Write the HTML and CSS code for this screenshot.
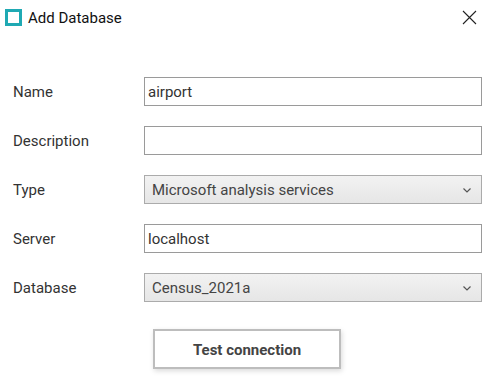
FILE: index.html
```html
<!DOCTYPE html>
<html lang="en">
    <head>
        <meta charset="UTF-8" />
        <title>Add Database</title>
        <link rel="stylesheet" href="styles.css">
    </head>

    <body>
        <div class="dialog">
            <div class="titlebar">
                <span class="app-icon"></span>
                <span class="title">Add Database</span>
                <svg class="close" width="15" height="15" viewBox="0 0 15 15">
                    <path d="M1 1 L14 14 M14 1 L1 14" stroke="#222" stroke-width="1.1" fill="none" />
                </svg>
            </div>

            <div class="form">
                <div class="row">
                    <label>Name</label>
                    <div class="field">airport</div>
                </div>
                <div class="row">
                    <label>Description</label>
                    <div class="field"></div>
                </div>
                <div class="row">
                    <label>Type</label>
                    <div class="field select">
                        <span>Microsoft analysis services</span>
                        <svg class="chevron" width="8" height="5" viewBox="0 0 8 5">
                            <path d="M0.5 0.5 L4 4 L7.5 0.5" stroke="#555" stroke-width="1.2" fill="none" />
                        </svg>
                    </div>
                </div>
                <div class="row">
                    <label>Server</label>
                    <div class="field">localhost</div>
                </div>
                <div class="row">
                    <label>Database</label>
                    <div class="field select">
                        <span>Census_2021a</span>
                        <svg class="chevron" width="8" height="5" viewBox="0 0 8 5">
                            <path d="M0.5 0.5 L4 4 L7.5 0.5" stroke="#555" stroke-width="1.2" fill="none" />
                        </svg>
                    </div>
                </div>
            </div>

            <div class="actions">
                <button class="btn">Test connection</button>
            </div>
        </div>
    </body>
</html>
```

FILE: styles.css
```css
* {
    padding: 0;
    margin: 0;
    box-sizing: border-box;
}

body {
    width: 499px;
    height: 386px;
    background-color: #fff;
    font-family: Roboto, "Noto Sans", sans-serif;
    color: #222;
    overflow: hidden;
}

.titlebar {
    display: flex;
    align-items: center;
    height: 35px;
    padding: 0 22px 0 5px;
}

.app-icon {
    width: 17px;
    height: 17px;
    border: 3px solid #1fa9b3;
    margin-right: 6px;
}

.title {
    flex: 1;
    font-size: 15px;
    color: #111;
}

.form {
    display: flex;
    flex-direction: column;
    gap: 20px;
    padding: 42px 17px 0 13px;
}

.row {
    display: flex;
    align-items: center;
    height: 29px;
}

.row label {
    width: 131px;
    font-size: 15px;
    color: #333;
}

.field {
    flex: 1;
    display: flex;
    align-items: center;
    height: 29px;
    padding: 0 3px 0;
    border: 1px solid #9a9a9a;
    background-color: #fff;
    font-size: 15px;
    color: #333;
}

.select {
    justify-content: space-between;
    padding: 0 10px 0 7px;
    border-color: #ababab;
    background: linear-gradient(#f2f2f2, #e6e6e6);
    color: #444;
}

.chevron {
    margin-top: 1px;
}

.actions {
    display: flex;
    padding: 27px 0 0 153px;
}

.btn {
    width: 188px;
    height: 40px;
    padding-top: 2px;
    border: 2px solid #bdbdbd;
    background-color: #fff;
    box-shadow: 1px 2px 5px rgba(0, 0, 0, 0.15);
    font-family: Roboto, "Noto Sans", sans-serif;
    font-size: 15px;
    font-weight: 700;
    color: #444;
}
```
